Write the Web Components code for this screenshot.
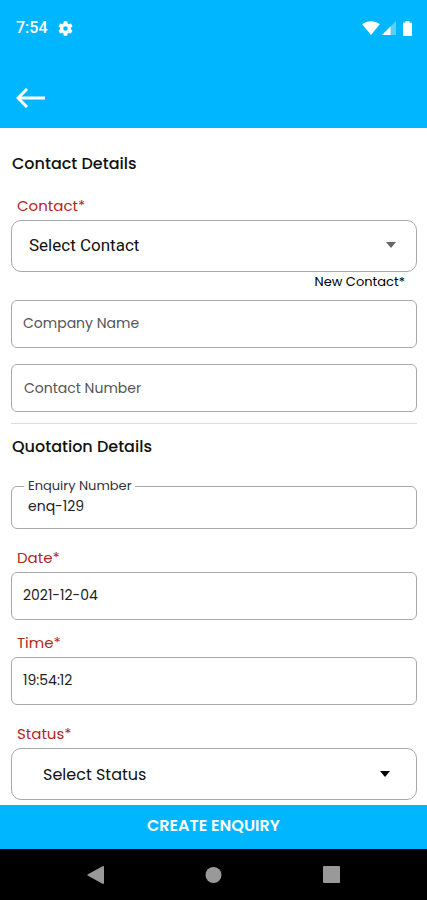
<!DOCTYPE html>
<html lang="en">
<head>
<meta charset="utf-8">
<meta name="viewport" content="width=device-width, initial-scale=1">
<title>Create Enquiry</title>
<style>
  html, body { margin: 0; }
  body {
    --accent: #00b7ff;
    --line: #a9a9a9;
    --required: #b22626;
    background: #fff;
    color: #111;
    font-family: Poppins, Inter, "Liberation Sans", sans-serif;
    font-size: 14px;
  }
</style>
</head>
<body>
<enquiry-screen></enquiry-screen>
<script>
const define = (name, html, setup) => customElements.define(name, class extends HTMLElement {
  constructor() {
    super();
    const root = this.attachShadow({ mode: "open" });
    const template = document.createElement("template");
    template.innerHTML = html;
    root.append(template.content.cloneNode(true));
  }
  connectedCallback() { if (setup) setup(this, this.shadowRoot); }
});

define("status-bar", `
  <style>
    :host { display: flex; align-items: center; height: 56px; padding: 0 15px 0 16px; color: #fff; }
    time { font: 500 16px/20px Roboto, sans-serif; }
    svg { display: block; fill: currentColor; }
    .gear { margin-left: 10px; margin-right: auto; }
    .signal { margin-left: 2px; }
    .battery { margin-left: 7px; }
  </style>
  <time>7:54</time>
  <svg class="gear" width="15" height="15" viewBox="2 2 20 20"><path d="M19.14 12.94c.04-.3.06-.61.06-.94s-.02-.64-.07-.94l2.03-1.58a.49.49 0 0 0 .12-.61l-1.92-3.32a.49.49 0 0 0-.59-.22l-2.39.96a7 7 0 0 0-1.62-.94l-.36-2.54a.48.48 0 0 0-.48-.41h-3.84a.48.48 0 0 0-.47.41l-.36 2.54c-.59.24-1.13.57-1.62.94l-2.39-.96a.48.48 0 0 0-.59.22L2.74 8.87a.48.48 0 0 0 .12.61l2.03 1.58c-.05.3-.09.63-.09.94s.02.64.07.94l-2.03 1.58a.49.49 0 0 0-.12.61l1.92 3.32c.12.22.37.29.59.22l2.39-.96c.5.38 1.03.7 1.62.94l.36 2.54c.05.24.24.41.48.41h3.84c.24 0 .44-.17.47-.41l.36-2.54a7 7 0 0 0 1.62-.94l2.39.96c.22.08.47 0 .59-.22l1.92-3.32a.48.48 0 0 0-.12-.61zM12 15a3 3 0 1 1 0-6 3 3 0 0 1 0 6z"/></svg>
  <svg width="18" height="14" viewBox="0 0 18 14"><path d="M9 14 .2 3.2C2.600 1.200 5.600.2 9 .2s6.400 1 8.800 3z"/></svg>
  <svg class="signal" width="14" height="14" viewBox="0 0 14 14"><path opacity=".35" d="M14 0v14H0z"/><path d="M8.500 5.500V14H0z"/></svg>
  <svg class="battery" width="9" height="15" viewBox="0 0 9 15"><path d="M2.500 0h4v1.500H8q1 0 1 1V14q0 1-1 1H1q-1 0-1-1V2.500q0-1 1-1h1.500z"/></svg>
`);

define("app-header", `
  <style>
    :host { display: block; background: var(--accent); color: #fff; }
    nav { display: flex; align-items: center; box-sizing: border-box; height: 72px; padding: 12px 16px 0; }
    button { display: block; margin: 0; padding: 0; border: 0; background: none; color: inherit; }
    svg { display: block; fill: none; stroke: currentColor; stroke-width: 3; }
  </style>
  <slot></slot>
  <nav><button type="button" aria-label="Back"><svg width="30" height="20" viewBox="0 0 30 20"><path d="M2 10h27"/><path d="M11 1 2 10l9 9"/></svg></button></nav>
`);

define("section-heading", `
  <style>
    :host { display: block; }
    h2 { margin: 0; padding-left: 1px; font-size: 16px; font-weight: 500; line-height: 24px; color: #111; }
  </style>
  <h2><slot></slot></h2>
`);

define("text-field", `
  <style>
    :host { display: block; }
    label { display: block; width: max-content; padding-left: 6px; margin-bottom: 4px; font-size: 15px; line-height: 20px; color: var(--required); }
    label[hidden] { display: none; }
    input { display: block; box-sizing: border-box; width: 100%; height: 48px; margin: 0; padding: 0 12px 2px 11px; border: 1px solid var(--line); border-radius: 6px; background: none; font: inherit; color: #222; outline: 0; }
    :host([inset]) input { padding: 0 12px; }
    input::placeholder { color: #555; opacity: 1; }
  </style>
  <label for="field"></label>
  <input id="field" type="text">
`, (host, root) => {
  const label = root.querySelector("label");
  const input = root.querySelector("input");
  const text = host.getAttribute("label");
  if (text) label.textContent = text; else label.hidden = true;
  const hint = host.getAttribute("placeholder");
  if (hint) { input.placeholder = hint; input.setAttribute("aria-label", hint); }
  input.value = host.getAttribute("value") || "";
});

define("outlined-field", `
  <style>
    :host { display: block; }
    fieldset { margin: 0; min-width: 0; padding: 0 12px 12px; border: 1px solid var(--line); border-radius: 6px; }
    legend { padding: 0 4px; font-size: 13px; line-height: 20px; color: #333; }
    label { display: block; }
    input { display: block; box-sizing: border-box; width: 100%; height: 20px; margin: 0; padding: 0 4px; border: 0; background: none; font: inherit; color: #222; outline: 0; }
  </style>
  <fieldset><legend><label for="field"></label></legend><input id="field" type="text"></fieldset>
`, (host, root) => {
  root.querySelector("label").textContent = host.getAttribute("label");
  root.querySelector("input").value = host.getAttribute("value") || "";
});

define("select-field", `
  <style>
    :host { display: block; --indent: 17px; --arrow: #666; --arrow-end: 20px; --lift: 2px; }
    :host([inset]) { --indent: 31px; --arrow: #000; --arrow-end: 26px; --lift: 0px; }
    label { display: block; width: max-content; padding-left: 6px; margin-bottom: 4px; font-size: 15px; line-height: 20px; color: var(--required); }
    .box { display: grid; align-items: center; }
    select, svg { grid-area: 1 / 1; }
    select { appearance: none; box-sizing: border-box; width: 100%; height: 52px; margin: 0; padding: 0 48px var(--lift) var(--indent); border: 1px solid var(--line); border-radius: 10px; background: none; font-family: inherit; font-size: 16px; color: #111; outline: 0; }
    :host([system]) select { font-family: Roboto, sans-serif; font-size: 17px; }
    svg { justify-self: end; margin-right: var(--arrow-end); margin-bottom: var(--lift); fill: var(--arrow); pointer-events: none; }
  </style>
  <label for="choice"></label>
  <div class="box">
    <select id="choice"></select>
    <svg width="12" height="6" viewBox="0 0 12 6"><path d="M1 0h10L6 6z"/></svg>
  </div>
`, (host, root) => {
  root.querySelector("label").textContent = host.getAttribute("label");
  root.querySelector("select").replaceChildren(new Option(host.getAttribute("value")));
});

define("contact-link", `
  <style>
    :host { display: flex; justify-content: flex-end; padding-right: 12px; font-size: 13px; line-height: 20px; }
    a { color: #000; text-decoration: none; }
  </style>
  <a href="#new-contact"><slot></slot></a>
`);

define("submit-bar", `
  <style>
    :host { display: block; }
    button { display: block; width: 100%; height: 44px; margin: 0; padding: 0 0 4px; border: 0; background: var(--accent); color: #fff; font-family: inherit; font-size: 16px; font-weight: 600; }
  </style>
  <button type="submit"><slot></slot></button>
`);

define("system-nav", `
  <style>
    :host { display: flex; justify-content: center; align-items: center; height: 51px; background: #000; }
    nav { display: grid; grid-template-columns: repeat(3, 1fr); width: 83%; justify-items: center; }
    button { display: block; margin: 0; padding: 0; border: 0; background: none; color: #999; }
    svg { display: block; fill: currentColor; }
  </style>
  <nav aria-label="System">
    <button type="button" aria-label="Back"><svg width="18" height="18" viewBox="0 0 18 18"><path d="M17 0q1 0 1 1v16q0 1-1 1L1.500 9.500v-1z"/></svg></button>
    <button type="button" aria-label="Home"><svg width="18" height="18" viewBox="0 0 18 18"><circle cx="9.500" cy="9" r="8"/></svg></button>
    <button type="button" aria-label="Recents"><svg width="18" height="18" viewBox="0 0 18 18"><rect y="0" width="17" height="17" rx="1"/></svg></button>
  </nav>
`);

define("enquiry-screen", `
  <style>
    :host { display: flex; flex-direction: column; min-height: 100vh; }
    main { flex: 1; padding: 24px 10px 5px 11px; }
    section { display: flex; flex-direction: column; }
    .contact select-field { margin-top: 20px; }
    contact-link { margin-bottom: 8px; }
    .contact text-field + text-field { margin-top: 16px; }
    hr { width: 100%; height: 1px; margin: 11px 0; border: 0; background: #ddd; }
    outlined-field { margin-top: 17px; }
    .quotation text-field { margin-top: 19px; }
    .quotation text-field + text-field { margin-top: 13px; }
    .quotation select-field { margin-top: 19px; }
    footer { position: sticky; bottom: 0; }
  </style>
  <app-header><status-bar></status-bar></app-header>
  <main>
    <section class="contact">
      <section-heading>Contact Details</section-heading>
      <select-field system label="Contact*" value="Select Contact"></select-field>
      <contact-link>New Contact*</contact-link>
      <text-field placeholder="Company Name"></text-field>
      <text-field inset placeholder="Contact Number"></text-field>
    </section>
    <hr>
    <section class="quotation">
      <section-heading>Quotation Details</section-heading>
      <outlined-field label="Enquiry Number" value="enq-129"></outlined-field>
      <text-field label="Date*" value="2021-12-04"></text-field>
      <text-field label="Time*" value="19:54:12"></text-field>
      <select-field inset label="Status*" value="Select Status"></select-field>
    </section>
  </main>
  <footer>
    <submit-bar>CREATE ENQUIRY</submit-bar>
    <system-nav></system-nav>
  </footer>
`);
</script>
</body>
</html>
